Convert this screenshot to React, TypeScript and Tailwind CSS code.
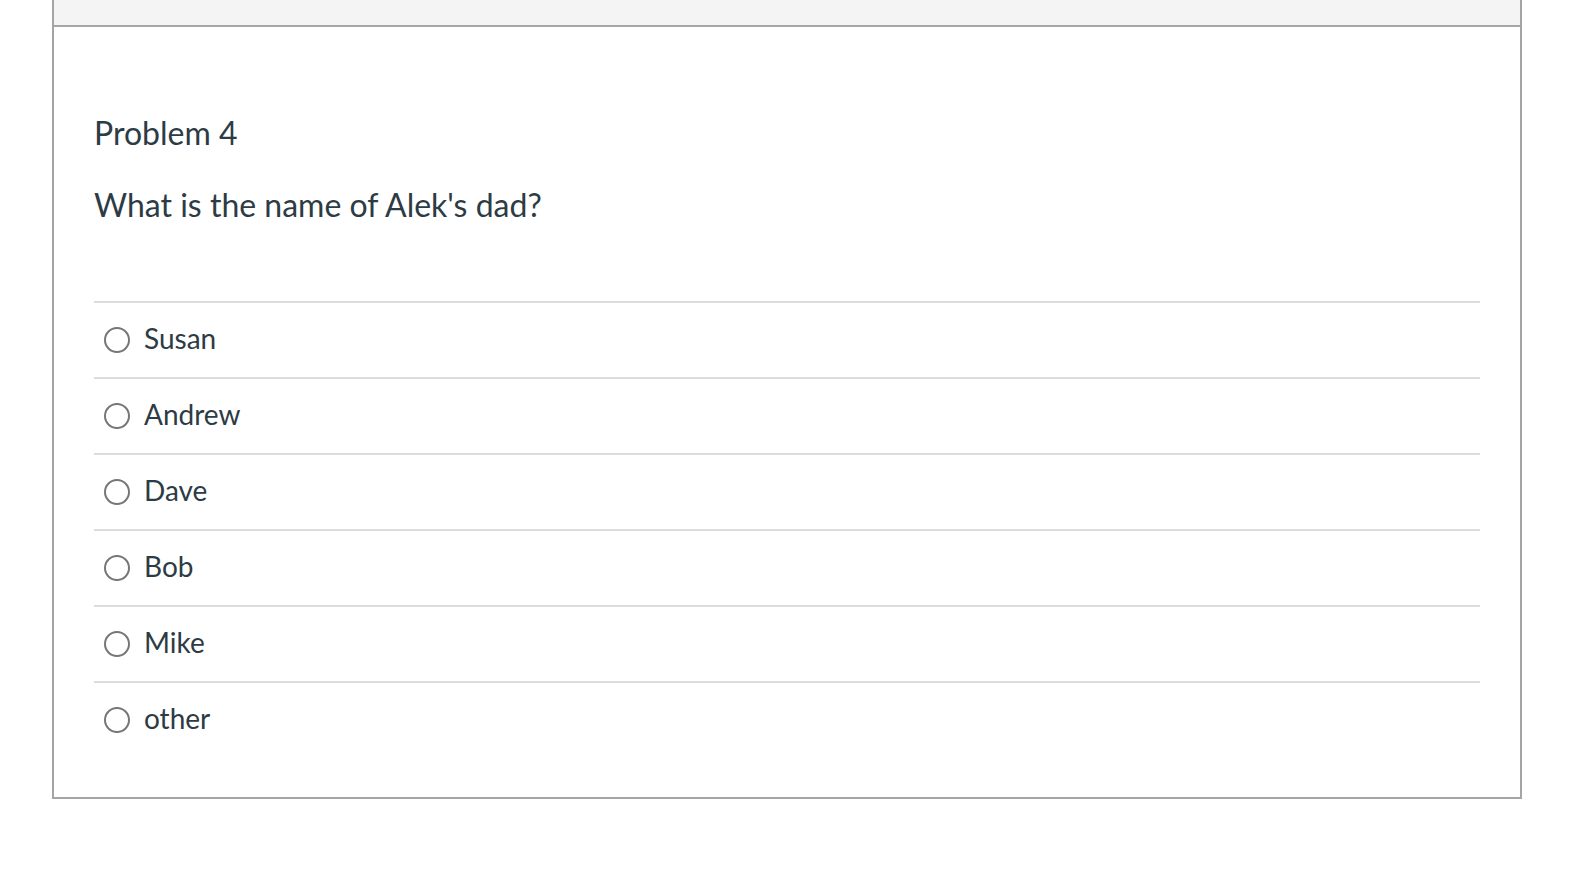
import React from "react";

const answers = ["Susan", "Andrew", "Dave", "Bob", "Mike", "other"];

const Radio = () => (
  <span className="w-[26px] h-[26px] rounded-full border-2 border-[#767676] bg-white shrink-0" />
);

const App = () => {
  return (
    <div
      className="min-h-screen bg-white pl-[52px] pr-[54px] text-[#2d3b45]"
      style={{ fontFamily: "Lato, 'Open Sans', sans-serif" }}
    >
      <div className="border-x-2 border-b-2 border-[#a5a5a5]">
        <div className="h-[27px] bg-[#f4f4f4] border-b-2 border-[#a5a5a5]" />

        <div className="px-[40px] pt-[86px] pb-[40px]">
          <div className="text-[32px] leading-[40px]">Problem 4</div>

          <div className="mt-[32px] text-[32px] leading-[40px]">
            What is the name of Alek's dad?
          </div>

          <div className="mt-[76px]">
            {answers.map((a) => (
              <div
                key={a}
                className="h-[76px] border-t-2 border-[#dcdcdc] flex items-center pl-[10px] gap-[14px]"
              >
                <Radio />
                <span className="text-[28px] leading-[32px] mb-[5px]">{a}</span>
              </div>
            ))}
          </div>
        </div>
      </div>
    </div>
  );
};

export default App;
